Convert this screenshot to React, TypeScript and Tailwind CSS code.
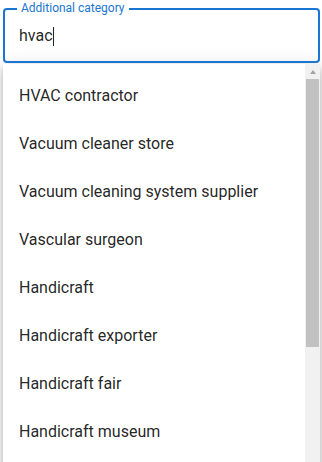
import React from "react";

const items = [
  "HVAC contractor",
  "Vacuum cleaner store",
  "Vacuum cleaning system supplier",
  "Vascular surgeon",
  "Handicraft",
  "Handicraft exporter",
  "Handicraft fair",
  "Handicraft museum",
];

export default function App() {
  return (
    <div
      className="relative w-[322px] h-[462px] overflow-hidden bg-white"
      style={{ fontFamily: "Roboto, 'Liberation Sans', sans-serif" }}
    >
      <div className="pt-[8px] px-[3px] pr-[2px]">
        <div className="relative h-[55px] rounded-[4px] border-2 border-[#1976d2] flex items-center pl-[14px]">
          <span className="absolute -top-[9px] left-[12px] bg-white px-[4px] text-[12px] leading-[14px] text-[#1976d2]">
            Additional category
          </span>
          <span className="text-[16px] leading-[20px] text-[rgba(0,0,0,0.87)] mt-[1px]">hvac</span>
          <span className="w-[1px] h-[19px] bg-[#222] mt-[1px]" />
        </div>
      </div>
      <div className="mt-[1px] ml-[3px] mr-[2px] h-[420px] flex bg-white shadow-[0_3px_5px_-1px_rgba(0,0,0,0.2),0_6px_10px_0_rgba(0,0,0,0.14),0_1px_18px_0_rgba(0,0,0,0.12)] overflow-hidden">
        <div className="flex-1 pt-[8px]">
          {items.map((t) => (
            <div
              key={t}
              className="h-[48px] flex items-center pl-[16px] text-[16px] text-[rgba(0,0,0,0.87)]"
            >
              {t}
            </div>
          ))}
        </div>
        <div className="w-[15px] bg-[#f1f1f1] flex flex-col items-center">
          <div className="h-[15px] w-full flex items-center justify-center">
            <div className="w-0 h-0 border-l-[3.5px] border-r-[3.5px] border-b-[4px] border-l-transparent border-r-transparent border-b-[#a3a3a3]" />
          </div>
          <div className="w-[13px] h-[268px] bg-[#c1c1c1]" />
        </div>
      </div>
    </div>
  );
}
